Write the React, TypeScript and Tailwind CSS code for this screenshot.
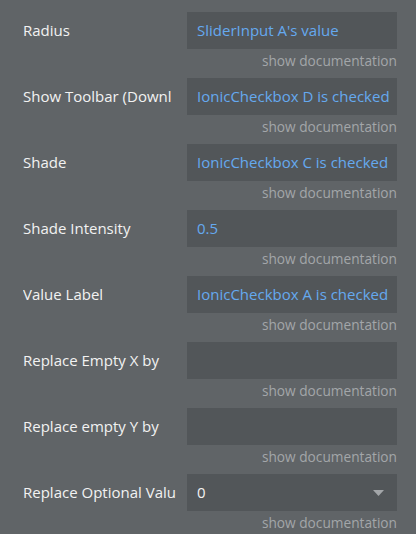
const ROWS = [
  { label: "Radius", value: "SliderInput A's value" },
  { label: "Show Toolbar (Downl", value: "IonicCheckbox D is checked" },
  { label: "Shade", value: "IonicCheckbox C is checked" },
  { label: "Shade Intensity", value: "0.5" },
  { label: "Value Label", value: "IonicCheckbox A is checked" },
  { label: "Replace Empty X by", value: "" },
  { label: "Replace empty Y by", value: "" },
  { label: "Replace Optional Valu", value: "0", dropdown: true },
];

export default function App() {
  return (
    <div
      className="w-[416px] h-[534px] bg-[#606467] pt-3 pl-[23px] pr-[19px] overflow-hidden"
      style={{ fontFamily: '"Open Sans", sans-serif' }}
    >
      {ROWS.map((row, i) => (
        <div key={i} className="mb-[8px]">
          <div className="flex items-center">
            <div className="w-[164px] overflow-hidden whitespace-nowrap text-[15px] text-[#f2f2f2]">
              {row.label}
            </div>
            <div className="flex-1 h-[37px] bg-[#525659] flex items-center pl-[10px] pr-[13px] text-[15px] text-[#65a9ef] whitespace-nowrap overflow-hidden">
              <span className={row.dropdown ? "flex-1 text-[#f2f2f2]" : "flex-1"}>
                {row.value}
              </span>
              {row.dropdown && (
                <svg width="11" height="6" viewBox="0 0 11 6">
                  <path d="M0 0h11L5.5 6z" fill="#a3a6a9" />
                </svg>
              )}
            </div>
          </div>
          <div className="mt-[2px] text-right text-[13.7px] leading-[19px] text-[#a3a6a9]">
            show documentation
          </div>
        </div>
      ))}
    </div>
  );
}
